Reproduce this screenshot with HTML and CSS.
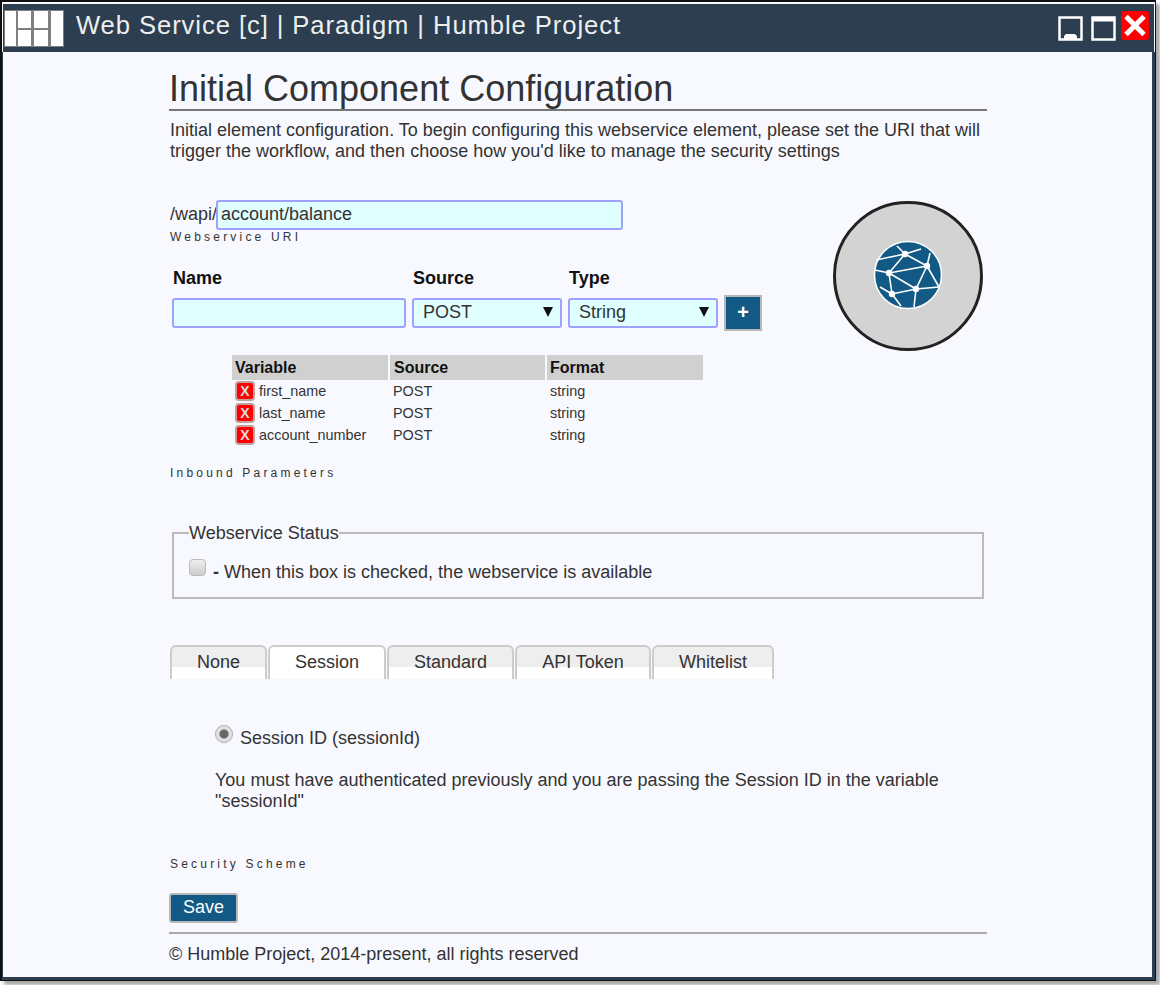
FILE: index.html
```html
<!DOCTYPE html>
<html lang="en">
  <head>
    <meta charset="UTF-8" />
    <title>Web Service [c] | Paradigm | Humble Project</title>
    <link rel="stylesheet" href="styles.css">
  </head>
  <body>
    <div class="window">
      <div class="title-bar">
        <svg class="app-logo" width="60" height="37" viewBox="0 0 60 37">
          <rect width="60" height="37" fill="#808080"/>
          <rect x="1" y="1" width="11" height="35" fill="#fff"/>
          <rect x="14" y="1" width="13" height="17" fill="#fff"/>
          <rect x="30" y="1" width="14" height="17" fill="#fff"/>
          <rect x="14" y="20" width="13" height="16" fill="#fff"/>
          <rect x="30" y="20" width="14" height="16" fill="#fff"/>
          <rect x="47" y="1" width="12" height="35" fill="#fff"/>
        </svg>
        <div class="title-text">Web Service [c] | Paradigm | Humble Project</div>
        <div class="window-controls">
          <svg width="25" height="25" viewBox="0 0 25 25">
            <rect x="1.500" y="1.500" width="22" height="22" fill="none" stroke="#fff" stroke-width="2.500"/>
            <path d="M6 23v-3l2-2h9l2 2v3z" fill="#fff"/>
          </svg>
          <svg class="maximize" width="25" height="25" viewBox="0 0 25 25">
            <rect x="1.500" y="1.500" width="22" height="22" fill="none" stroke="#fff" stroke-width="2.500"/>
            <rect x="1.500" y="1.500" width="22" height="4" fill="#fff"/>
          </svg>
          <div class="close-box">
            <svg width="28" height="29" viewBox="0 0 28 29">
              <path d="M5 5.500l18 18M23 5.500l-18 18" stroke="#fff" stroke-width="5" fill="none"/>
            </svg>
          </div>
        </div>
      </div>

      <div class="content">
        <h1 class="page-title">Initial Component Configuration</h1>
        <p class="intro">Initial element configuration. To begin configuring this webservice element, please set the URI that will trigger the workflow, and then choose how you'd like to manage the security settings</p>

        <div class="top-section">
          <div class="top-left">
            <div class="uri-row">
              <span class="uri-label">/wapi/</span>
              <input class="field uri-input" type="text" value="account/balance" />
            </div>
            <div class="caption">Webservice URI</div>

            <div class="param-form">
              <div class="param-col name-col">
                <label class="param-label">Name</label>
                <input class="field name-input" type="text" />
              </div>
              <div class="param-col">
                <label class="param-label">Source</label>
                <div class="select-wrap">
                  <select class="field select-input"><option>POST</option></select>
                </div>
              </div>
              <div class="param-col">
                <label class="param-label">Type</label>
                <div class="select-wrap">
                  <select class="field select-input"><option>String</option></select>
                </div>
              </div>
              <button class="add-button">+</button>
            </div>

            <table class="param-table">
              <thead>
                <tr><th>Variable</th><th>Source</th><th>Format</th></tr>
              </thead>
              <tbody>
                <tr>
                  <td><div class="var-name"><span class="remove-button">X</span>first_name</div></td>
                  <td>POST</td>
                  <td>string</td>
                </tr>
                <tr>
                  <td><div class="var-name"><span class="remove-button">X</span>last_name</div></td>
                  <td>POST</td>
                  <td>string</td>
                </tr>
                <tr>
                  <td><div class="var-name"><span class="remove-button">X</span>account_number</div></td>
                  <td>POST</td>
                  <td>string</td>
                </tr>
              </tbody>
            </table>
            <div class="caption inbound-caption">Inbound Parameters</div>
          </div>

          <div class="element-icon">
            <svg width="70" height="70" viewBox="-35 -35 70 70">
              <circle r="33.500" fill="#125a85" stroke="#fff" stroke-width="1.500"/>
              <g stroke="#fff" stroke-width="1.600" fill="none">
                <path d="M-3-21L19-9M-3-21L-19-2M-19-2L19-9M-19-2L8 14M19-9L8 14M-19-2L-16 19M-16 19L8 14"/>
                <path d="M-3-21L-11-29M-3-21L13-26M-3-21L-32-15M19-9L22-22M19-9L31 12M8 14L31 12M8 14L6 32M-16 19L-7 31M-16 19L-28 12M-19-2L-33-5"/>
              </g>
              <g fill="#fff">
                <circle cx="-3" cy="-21" r="3.200"/>
                <circle cx="19" cy="-9" r="3.200"/>
                <circle cx="-19" cy="-2" r="3.200"/>
                <circle cx="8" cy="14" r="3.200"/>
                <circle cx="-16" cy="19" r="3.200"/>
              </g>
            </svg>
          </div>
        </div>

        <fieldset class="status-box">
          <legend>Webservice Status</legend>
          <input class="checkbox" type="checkbox" />
          <span class="status-text"><b>-</b> When this box is checked, the webservice is available</span>
        </fieldset>

        <div class="tabs">
          <div class="tab tab-none">None</div>
          <div class="tab tab-session active">Session</div>
          <div class="tab tab-standard">Standard</div>
          <div class="tab tab-token">API Token</div>
          <div class="tab tab-whitelist">Whitelist</div>
        </div>

        <div class="tab-body">
          <div class="radio-row">
            <input class="radio" type="radio" checked />
            <span>Session ID (sessionId)</span>
          </div>
          <p class="scheme-note">You must have authenticated previously and you are passing the Session ID in the variable "sessionId"</p>
        </div>
        <div class="caption scheme-caption">Security Scheme</div>

        <button class="save-button">Save</button>
        <div class="footer">© Humble Project, 2014-present, all rights reserved</div>
      </div>
    </div>
  </body>
</html>
```

FILE: styles.css
```css
* {
  box-sizing: border-box;
}
html,
body {
  height: 100%;
}
body {
  margin: 0;
  background: #fff;
  font-family: "Liberation Sans", Arial, sans-serif;
  color: #333;
  overflow: hidden;
}
.window {
  width: 1156px;
  height: 981px;
  background: #f8f9ff;
  border: 1px solid #111;
  border-top-width: 2px;
  border-left-width: 2px;
  box-shadow: 4px 4px 3px #aaa;
  outline: 1px solid #111;
  outline-offset: -1px;
  display: flex;
  flex-direction: column;
}
.title-bar {
  height: 48px;
  flex: none;
  background: #2c3e50;
  margin: 2px 1px 0 1px;
  display: flex;
  align-items: flex-start;
  padding: 6px 0 0 1px;
}
.app-logo {
  flex: none;
}
.title-text {
  margin: 0 0 0 12px;
  color: #eee;
  font-size: 25.6px;
  line-height: 30px;
  letter-spacing: 0.93px;
}
.window-controls {
  margin-left: auto;
  display: flex;
  align-items: flex-start;
  padding: 6px 5px 0 0;
}
.maximize {
  margin-left: 8px;
}
.close-box {
  width: 28px;
  height: 29px;
  margin: -5px 0 0 5px;
  background: #f00;
  border-radius: 3px;
}
.close-box svg {
  display: block;
}
.content {
  flex: 1;
  border: solid #2c3e50;
  border-width: 0 3px 3px 1px;
  padding: 0 165px 0 166px;
}
.page-title {
  margin: 0;
  height: 59px;
  padding-top: 16px;
  font-size: 36px;
  line-height: 41px;
  font-weight: normal;
  border-bottom: 2px solid #777;
}
.intro {
  margin: 9px 0 0;
  padding-left: 1px;
  font-size: 18px;
  line-height: 21px;
}
.top-section {
  display: flex;
  justify-content: space-between;
  margin-top: 38px;
  padding-right: 4px;
}
.top-left {
  width: 610px;
}
.uri-row {
  display: flex;
  align-items: center;
  font-size: 18px;
}
.uri-label {
  width: 47px;
  padding: 0 0 2px 1px;
}
.field {
  height: 30px;
  border: 2px solid #a0a0ff;
  border-radius: 3px;
  background: #e0ffff;
  font-family: inherit;
  font-size: 18px;
  color: #333;
  padding: 0 9px 2px;
  outline: none;
}
.uri-input {
  width: 407px;
  padding: 0 3px 2px;
}
.caption {
  margin-top: 0;
  padding-left: 1px;
  font-size: 12px;
  line-height: 14px;
  letter-spacing: 3.2px;
}
.param-form {
  display: flex;
  align-items: flex-end;
  margin-top: 24px;
  padding-left: 3px;
}
.param-col {
  display: flex;
  flex-direction: column;
  margin-right: 6px;
}
.param-label {
  font-size: 18px;
  font-weight: bold;
  line-height: 20px;
  color: #111;
  margin: 0 0 10px 1px;
}
.name-input {
  width: 234px;
}
.select-wrap {
  position: relative;
  width: 150px;
}
.select-wrap::after {
  content: "";
  position: absolute;
  top: 9px;
  right: 9px;
  border-style: solid;
  border-width: 10px 5px 0 5px;
  border-color: #111 transparent transparent transparent;
}
.select-input {
  width: 100%;
  appearance: none;
}
.add-button {
  width: 38px;
  height: 36px;
  border: 2px solid #b8b8b8;
  background: #125a85;
  color: #fff;
  font-family: inherit;
  font-size: 20px;
  font-weight: bold;
  padding: 0 0 2px;
  margin-bottom: -3px;
}
.param-table {
  margin: 27px 0 0 63px;
  width: 471px;
  border-collapse: collapse;
  table-layout: fixed;
  font-size: 14.4px;
}
.param-table th {
  background: #d0d0d0;
  border-right: 2px solid #f8f9ff;
  height: 25px;
  padding: 0 0 0 4px;
  font-size: 16px;
  text-align: left;
  color: #111;
}
.param-table th:first-child {
  padding-left: 3px;
}
.param-table th:last-child {
  border-right: none;
  padding-left: 3px;
}
.param-table td {
  height: 22px;
  padding: 0 0 0 4px;
  white-space: nowrap;
}
.var-name {
  display: flex;
  align-items: center;
  margin-left: -1px;
}
.remove-button {
  width: 20px;
  height: 20px;
  margin-right: 4px;
  background: #f00;
  border: 2px solid #c0a0a0;
  border-radius: 4px;
  color: #ddd;
  font-size: 14px;
  font-weight: bold;
  line-height: 16px;
  text-align: center;
}
.inbound-caption {
  margin-top: 20px;
}
.element-icon {
  width: 150px;
  height: 150px;
  margin-top: 1px;
  flex: none;
  background: #d3d3d3;
  border: 3px solid #222;
  border-radius: 50%;
  display: flex;
  align-items: center;
  justify-content: center;
  padding-bottom: 2px;
}
.status-box {
  margin: 43px 3px 0 3px;
  height: 76px;
  border: 2px solid #bbb;
  padding: 0 0 0 15px;
  font-size: 18px;
}
.status-box legend {
  padding: 0;
  line-height: 20px;
}
.checkbox {
  appearance: none;
  width: 17px;
  height: 17px;
  margin: 16px 0 0 0;
  border: 1px solid #bbb;
  border-radius: 4px;
  background: linear-gradient(#eee, #ccc);
  vertical-align: top;
}
.status-text {
  display: inline-block;
  margin: 19px 0 0 2px;
  vertical-align: top;
}
.tabs {
  display: flex;
  margin: 46px 0 0 1px;
  height: 34px;
  font-size: 18px;
}
.tab {
  border: 2px solid #ccc;
  border-bottom: none;
  border-radius: 6px 6px 0 0;
  background: linear-gradient(#eee 0, #eee 20px, #fff 20px);
  text-align: center;
  line-height: 31px;
}
.tab.active {
  background: #fff;
}
.tab-none {
  width: 97px;
  margin-right: 1px;
}
.tab-session {
  width: 118px;
  margin-right: 1px;
}
.tab-standard {
  width: 127px;
  margin-right: 1px;
}
.tab-token {
  width: 136px;
  margin-right: 1px;
}
.tab-whitelist {
  width: 122px;
}
.tab-body {
  padding: 46px 40px 0 46px;
  font-size: 18px;
}
.radio-row {
  display: flex;
  align-items: flex-start;
  line-height: 26px;
}
.radio {
  appearance: none;
  width: 18px;
  height: 18px;
  margin: 0 7px 0 0;
  border: 1px solid #aaa;
  border-radius: 50%;
  background: radial-gradient(circle, #666 0, #666 4px, #ddd 5px, #eee 100%);
}
.scheme-note {
  margin: 19px 0 0;
  line-height: 21px;
}
.scheme-caption {
  margin-top: 45px;
}
.save-button {
  display: block;
  width: 69px;
  height: 30px;
  margin-top: 22px;
  border: 2px solid #b8b8b8;
  border-radius: 3px;
  background: #125a85;
  color: #fff;
  font-family: inherit;
  font-size: 18px;
  padding: 0 0 2px;
}
.footer {
  margin-top: 9px;
  border-top: 2px solid #aaa;
  padding-top: 10px;
  font-size: 18px;
  line-height: 21px;
}
```
